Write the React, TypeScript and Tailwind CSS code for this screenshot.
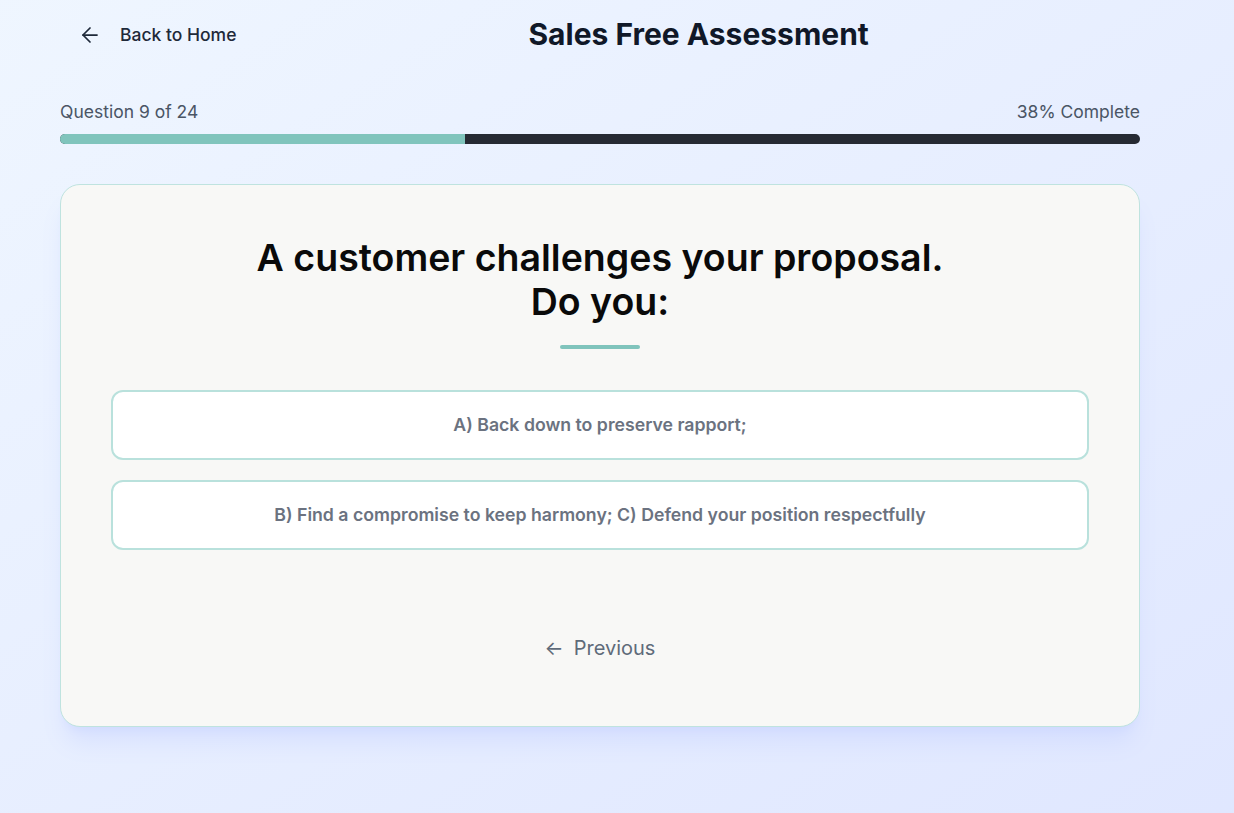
import React from 'react';
import { ArrowLeft } from 'lucide-react';

const options = ['A) Back down to preserve rapport;', 'B) Find a compromise to keep harmony; C) Defend your position respectfully'];

const App = () => {
  const current = 9;
  const total = 24;
  const pct = (current / total) * 100;
  return <div className="min-h-screen bg-gradient-to-br from-blue-50 to-indigo-100 font-['Inter',sans-serif]">
      <div className="w-[1080px] ml-[60px] pt-[14px]">
        <header className="flex items-center h-10">
          <button className="flex items-center gap-[18px] pl-[18px] pr-2 pt-0.5 h-10 rounded-md text-[17.5px] font-medium text-gray-800">
            <ArrowLeft className="h-6 w-6" strokeWidth={1.75} />
            Back to Home
          </button>
          <h1 className="ml-[284px] text-3xl font-bold text-gray-900">Sales Free Assessment</h1>
        </header>

        <div className="mt-[46px]">
          <div className="flex justify-between text-[17.5px] text-gray-600 leading-6">
            <span>Question {current} of {total}</span>
            <span>{Math.round(pct)}% Complete</span>
          </div>
          <div className="mt-[10px] h-2.5 w-full rounded-full bg-[#262a33] overflow-hidden">
            <div className="h-full bg-[#80c4bc]" style={{ width: `${pct}%` }} />
          </div>
        </div>

        <div className="mt-10 rounded-[20px] border border-[#bfe3df] bg-[#f8f8f6] shadow-xl shadow-indigo-200/50 px-[50px] pt-[51px] pb-[64px]">
          <h2 className="text-center text-[37.5px] leading-[44px] font-semibold text-[#0a0a0a]">
            A customer challenges your proposal.<br />Do you:
          </h2>
          <div className="mx-auto mt-[21px] h-1 w-20 rounded-full bg-[#80c4bc]" />
          <div className="mt-[41px] flex flex-col gap-5">
            {options.map(o => <button key={o} className="h-[70px] w-full rounded-xl border-2 border-[#b9e1dc] bg-white text-[17.7px] font-semibold text-[#6b7280]">
                {o}
              </button>)}
          </div>
          <div className="mt-[84px] flex justify-center">
            <button className="flex items-center gap-[10px] text-xl leading-7 text-[#5f6b7a]">
              <span>←</span>
              <span>Previous</span>
            </button>
          </div>
        </div>
      </div>
    </div>;
};

export default App;
